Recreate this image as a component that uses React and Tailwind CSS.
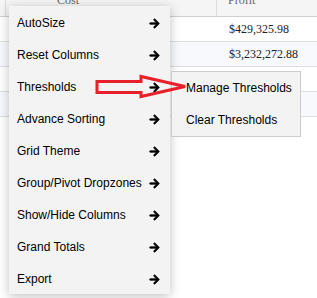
import { FaArrowRight } from 'react-icons/fa';

const menuItems = [
  'AutoSize',
  'Reset Columns',
  'Thresholds',
  'Advance Sorting',
  'Grid Theme',
  'Group/Pivot Dropzones',
  'Show/Hide Columns',
  'Grand Totals',
  'Export',
];

const rows = [
  { profit: '$429,325.98', bg: 'bg-white' },
  { profit: '$3,232,272.88', bg: 'bg-[#f7f9fc]' },
  { profit: '', bg: 'bg-white' },
  { profit: '', bg: 'bg-[#f7f9fc]' },
];

const App = () => {
  return (
    <div className="relative w-[317px] h-[298px] overflow-hidden bg-white">
      {/* grid behind the menu */}
      <div className="font-['Liberation_Serif',serif] text-[12px]">
        <div className="flex h-[17px] bg-[#f5f5f5] border-b border-[#cfcfcf] text-[#666] overflow-hidden">
          <div className="w-[6px] border-r border-[#dcdcdc]" />
          <div className="w-[211px] border-r border-[#dcdcdc] pl-[51px]">
            <span className="block leading-[12px] -mt-[6px]">Cost</span>
          </div>
          <div className="flex-1 pl-[11px]">
            <span className="block leading-[12px] -mt-[6px]">Profit</span>
          </div>
        </div>
        {rows.map((row, i) => (
          <div
            key={i}
            className={`flex items-center h-[25px] border-b border-[#dedede] text-[#222] ${row.bg}`}
          >
            <div className="w-[217px]" />
            <div className="flex-1 pl-[12px]">{row.profit}</div>
          </div>
        ))}
      </div>

      {/* context menu */}
      <div className="absolute left-[9px] top-[6px] w-[161px] bg-[#f3f3f3] shadow-[0_2px_10px_rgba(0,0,0,0.25)] font-['Liberation_Sans',Arial,sans-serif] text-[12px] text-black">
        {menuItems.map((label) => (
          <div key={label} className="flex items-center justify-between h-[32px] pt-[2px] pl-[8px] pr-[10px]">
            <span>{label}</span>
            <FaArrowRight size={11} stroke="currentColor" strokeWidth={30} />
          </div>
        ))}
      </div>

      {/* submenu */}
      <div className="absolute left-[171px] top-[71px] w-[130px] border border-[#cccccc] bg-[#f3f3f3] font-['Liberation_Sans',Arial,sans-serif] text-[12px] text-black">
        <div className="flex items-center h-[32px] pl-[14px]">Manage Thresholds</div>
        <div className="flex items-center h-[32px] pl-[14px]">Clear Thresholds</div>
      </div>

      {/* red annotation arrow */}
      <svg className="absolute left-0 top-0 pointer-events-none" width="317" height="298">
        <polygon
          points="97,81.5 141,81.5 141,76.5 185,86.5 141,96.5 141,92.5 97,92.5"
          fill="none"
          stroke="#e8202a"
          strokeWidth="3"
        />
      </svg>
    </div>
  );
};

export default App;
